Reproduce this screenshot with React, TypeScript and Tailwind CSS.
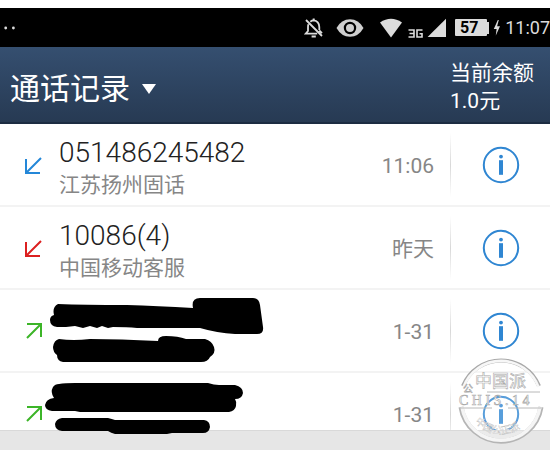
import { useState } from "react";

type CallKind = "incoming" | "missed" | "outgoing";

type CallEntry = {
  id: number;
  kind: CallKind;
  number?: string;
  place?: string;
  time: string;
  marks?: string[];
};

const calls: CallEntry[] = [
  { id: 1, kind: "incoming", number: "051486245482", place: "江苏扬州固话", time: "11:06" },
  { id: 2, kind: "missed", number: "10086(4)", place: "中国移动客服", time: "昨天" },
  {
    id: 3,
    kind: "outgoing",
    time: "1-31",
    marks: [
      "M13 14 Q38 15 82 15 Q112 16 148 18 Q146 8 155 8 H208 Q214 8 215 15 L218 37 Q219 44 212 44 H190 Q172 43 155 38 H92 Q82 37 68 37 L63 38 L57 36 L52 38 L45 36 L38 38 L30 36 L21 37 H12 Q5 36 5 30 Q5 26 9 25 Q7 17 13 14Z",
      "M14 49 Q28 51 45 49 Q75 49 113 51 Q113 46 121 46 Q133 46 141 49 H160 Q167 51 169 57 Q171 63 165 67 Q163 72 156 72 H18 Q12 71 12 65 Q8 62 8 57 Q9 50 14 49Z",
    ],
  },
  {
    id: 4,
    kind: "outgoing",
    time: "1-31",
    marks: [
      "M14 11 Q20 10 30 10 H163 Q169 12 174 12 H190 Q198 14 198 20 Q197 26 190 26 Q192 29 191 33 Q190 38 184 39 H35 L30 38 H7 Q0 37 0 32 Q1 26 9 25 Q5 19 8 14 Q10 11 14 11Z",
      "M17 45 H63 Q67 46 70 47 H118 L124 47 H159 Q165 48 165 54 Q164 60 158 60 H127 L122 61 H70 Q66 60 63 58 H17 Q10 57 10 51 Q11 46 17 45Z",
    ],
  },
];

const arrowColors: Record<CallKind, string> = {
  incoming: "text-[#2487d8]",
  missed: "text-[#dc2020]",
  outgoing: "text-[#3cb528]",
};

function CallArrow({ kind }: { kind: CallKind }) {
  return (
    <svg
      viewBox="0 0 18 18"
      className={`h-[18px] w-[18px] ${arrowColors[kind]}`}
      fill="none"
      stroke="currentColor"
      strokeWidth="2"
    >
      {kind === "outgoing" ? (
        <path d="M2 2H16V15M16 2L2 16" />
      ) : (
        <path d="M1 3V17H15M1 17L16 2" />
      )}
    </svg>
  );
}

function InfoIcon() {
  return (
    <svg viewBox="0 0 38 38" className="h-[38px] w-[38px]">
      <circle cx="19" cy="19" r="17.2" fill="none" stroke="#2f86d2" strokeWidth="2" />
      <circle cx="19" cy="10.6" r="1.9" fill="#2f86d2" />
      <rect x="17" y="14.2" width="4" height="14.6" fill="#2f86d2" />
    </svg>
  );
}

function StatusBar() {
  return (
    <div className="flex h-[39px] shrink-0 items-center justify-between bg-black text-[#dcdcdc]">
      <svg viewBox="0 0 14 4" className="ml-1 h-1 w-3.5" fill="#dcdcdc">
        <circle cx="1.7" cy="2" r="1.4" />
        <circle cx="9.4" cy="2" r="1.4" />
      </svg>
      <div className="flex items-center">
        <svg viewBox="0 0 20 20" className="mr-3 h-5 w-5" fill="none" stroke="#dcdcdc" strokeWidth="1.8">
          <path d="M2 2L18 18M6.3 3.7Q8 2.4 9.7 2.4Q15 3 15.3 9V12M4.4 6.2Q4 7.3 4 9V13L1.7 15.6H13.2M15.3 12.5L18 15.2" />
          <path d="M7.6 18.6H11.8M9.7 .6V2.4" strokeWidth="2" />
        </svg>
        <svg viewBox="0 0 28 20" className="mr-4 h-5 w-7">
          <path d="M.5 10Q5.4 1.3 14 1.3T27.5 10Q22.6 18.7 14 18.7T.5 10Z" fill="#cfcfcf" />
          <circle cx="14" cy="10" r="5.1" fill="#cfcfcf" stroke="#000" strokeWidth="2.2" />
        </svg>
        <svg viewBox="0 0 22 20" className="mr-1.5 h-5 w-[22px]" fill="#dcdcdc">
          <path d="M0 4.5Q11-3 22 4.5L11 19.5Z" />
        </svg>
        <svg viewBox="0 0 15 20" className="mr-1 h-5 w-[15px]" fill="none" stroke="#dcdcdc" strokeWidth="1.6">
          <path d="M.5 12H6V19H.5M1.5 15.5H6M14.5 12H9V19H14V15.7H11.5" />
        </svg>
        <svg viewBox="0 0 20 20" className="mr-2 h-5 w-5" fill="#dcdcdc">
          <path d="M19 .8V19H.6Z" />
        </svg>
        <div className="flex items-center">
          <span className="flex h-[17px] w-8 items-center justify-center rounded-[1px] bg-[#dcdcdc] pr-1 text-base leading-4 font-bold text-black">
            57
          </span>
          <span className="h-3 w-0.5 bg-[#dcdcdc]" />
        </div>
        <svg viewBox="0 0 8 18" className="mx-1 h-[18px] w-2" fill="#dcdcdc">
          <path d="M4.8 1L.8 10H3.6L2.8 16.5L7 7.3H4.1L5.8 1Z" />
        </svg>
        <span className="text-lg leading-5">11:07</span>
      </div>
    </div>
  );
}

function Header() {
  const [open, setOpen] = useState(false);

  return (
    <header className="flex h-[77px] shrink-0 items-center justify-between border-b-2 border-[#1c2c42] bg-linear-to-b from-[#354f70] to-[#273a53] pt-1 pr-4 pl-2.5 text-white">
      <button
        type="button"
        aria-expanded={open}
        onClick={() => setOpen(!open)}
        className="flex items-center gap-3 pt-1 text-[30px] leading-10"
      >
        通话记录
        <svg viewBox="0 0 14 10" className="h-2.5 w-3.5" fill="currentColor">
          <path d="M0 0H14L7 10Z" />
        </svg>
      </button>
      <p className="text-[21px] leading-7">
        当前余额
        <br />
        1.0元
      </p>
    </header>
  );
}

function CallRow({ call }: { call: CallEntry }) {
  return (
    <li className="flex h-[83px] items-center border-b-2 border-[#f3f3f3]">
      <div className="flex w-[45px] shrink-0 justify-end pr-0.5">
        <CallArrow kind={call.kind} />
      </div>
      <div className="min-w-0 flex-1">
        {call.marks ? (
          <svg viewBox="0 0 224 81" className="relative z-20 h-[81px] w-56">
            {call.marks.map((d) => (
              <path key={d} d={d} fill="#000" />
            ))}
          </svg>
        ) : (
          <div className="pt-1 pl-3.5">
            <p className="text-[28px] leading-9 font-light text-[#222]">{call.number}</p>
            <p className="text-[21px] leading-7 text-[#868686]">{call.place}</p>
          </div>
        )}
      </div>
      <time className="pt-1 pr-4 text-[21px] text-[#868686]">{call.time}</time>
      <div className="h-16 w-px bg-linear-to-b from-transparent via-[#d8d8d8] to-transparent" />
      <div className="flex w-[99px] shrink-0 justify-center">
        <button type="button" aria-label="详情">
          <InfoIcon />
        </button>
      </div>
    </li>
  );
}

function Watermark() {
  return (
    <svg
      viewBox="0 0 90 90"
      className="pointer-events-none absolute right-1 bottom-1 z-30 h-[90px] w-[90px]"
    >
      <circle cx="45" cy="45" r="39" fill="#fff" fillOpacity=".2" />
      <g fill="none">
        <path d="M7 30A41 41 0 0 1 83 30" stroke="#a9a9a9" strokeWidth="4" />
        <path d="M7.5 31A40 40 0 0 1 82.5 31" stroke="#f7f7f7" strokeWidth="2.6" />
        <path d="M5 51A40.5 40.5 0 0 0 85 51" stroke="#b5b5b5" strokeWidth="5" />
        <path d="M6 51A39.5 39.5 0 0 0 84 51" stroke="#f5f5f5" strokeWidth="3.6" />
        <path d="M31 36H84M4 52H36M52 52H85" stroke="#b8b8b8" />
        <path id="mark-curve" d="M15 60A34 34 0 0 0 75 60" />
      </g>
      <g fill="#fff" stroke="#aaa" strokeWidth=".6">
        <text x="19" y="31" fontSize="17">中国派</text>
        <text x="7" y="36" fontSize="10">公</text>
        <text x="3" y="49" fontSize="14" className="font-['Liberation_Serif',serif]">
          C H I S . 1 4
        </text>
        <text fontSize="10" strokeWidth=".3">
          <textPath href="#mark-curve" startOffset="7">中国公正派</textPath>
        </text>
      </g>
    </svg>
  );
}

export default function App() {
  return (
    <div className="relative flex h-screen flex-col overflow-hidden bg-white pt-2 font-['Roboto','Noto_Sans_CJK_SC',sans-serif]">
      <StatusBar />
      <Header />
      <ul className="min-h-0 flex-1">
        {calls.map((call) => (
          <CallRow key={call.id} call={call} />
        ))}
      </ul>
      <div className="relative z-10 h-5 shrink-0 border-t border-[#d9d9d9] bg-[#e6e6e6]" />
      <Watermark />
    </div>
  );
}
